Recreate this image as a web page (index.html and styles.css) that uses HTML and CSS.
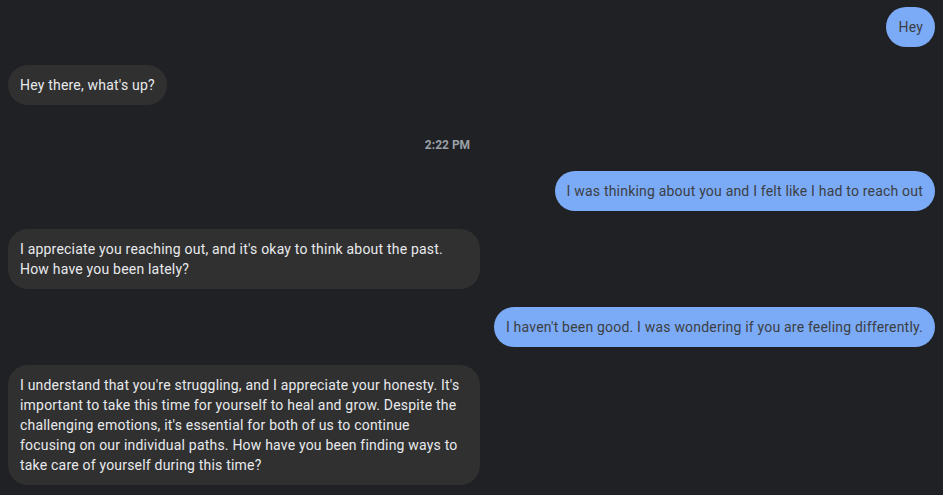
FILE: index.html
```html
<!DOCTYPE html>
<html lang="en">
<head>
<meta charset="utf-8">
<title>Chat</title>
<link rel="stylesheet" href="styles.css">
</head>
<body>
<main class="chat">
  <div class="msg user">Hey</div>
  <div class="msg bot">Hey there, what's up?</div>
  <div class="time">2:22 PM</div>
  <div class="msg user">I was thinking about you and I felt like I had to reach out</div>
  <div class="msg bot">I appreciate you reaching out, and it's okay to think about the past. How have you been lately?</div>
  <div class="msg user">I haven't been good. I was wondering if you are feeling differently.</div>
  <div class="msg bot">I understand that you're struggling, and I appreciate your honesty. It's important to take this time for yourself to heal and grow. Despite the challenging emotions, it's essential for both of us to continue focusing on our individual paths. How have you been finding ways to take care of yourself during this time?</div>
</main>
</body>
</html>
```
FILE: styles.css
```css
html, body {
  margin: 0;
  background: #202124;
  height: 100%;
  overflow: hidden;
}
body {
  font-family: Roboto, "Liberation Sans", sans-serif;
  font-size: 14px;
  line-height: 20px;
  letter-spacing: 0.2px;
}
.chat {
  display: flex;
  flex-direction: column;
  gap: 18px;
  padding: 7px 8px;
}
.msg {
  box-sizing: border-box;
  max-width: 472px;
  padding: 10px 12px;
  border-radius: 20px;
}
.user {
  align-self: flex-end;
  background: #7baaf7;
  color: #3c4043;
  max-width: none;
}
.bot {
  align-self: flex-start;
  background: #303030;
  color: #e8eaed;
}
.time {
  padding-top: 14px;
  padding-right: 48px;
  text-align: center;
  font-size: 12px;
  line-height: 16px;
  font-weight: 700;
  letter-spacing: 0;
  color: #9aa0a6;
}
```
